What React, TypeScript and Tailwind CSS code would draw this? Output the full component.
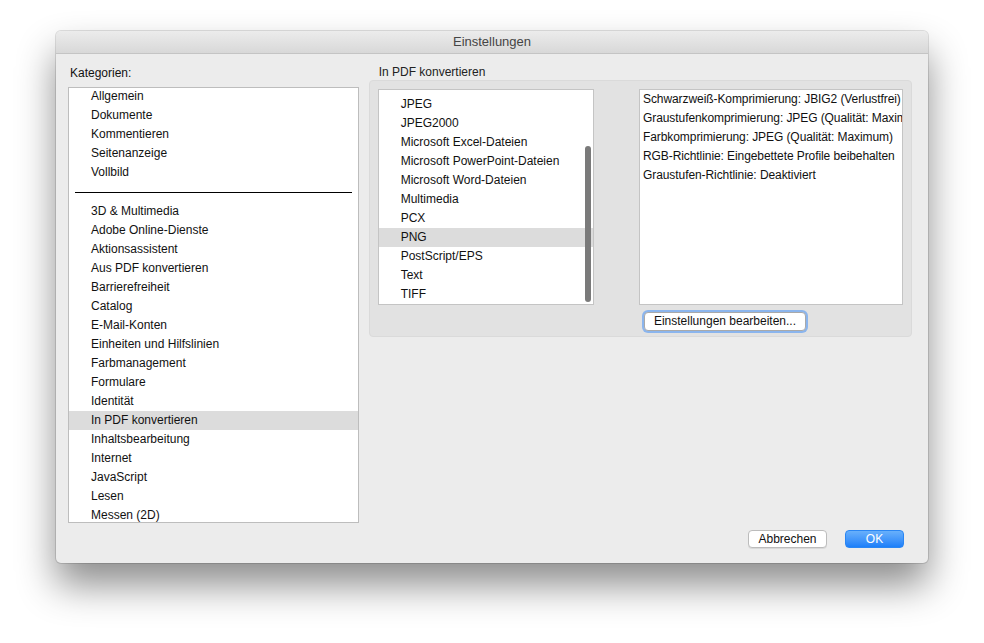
import React from "react";

const group1 = ["Allgemein", "Dokumente", "Kommentieren", "Seitenanzeige", "Vollbild"];
const group2 = [
  "3D & Multimedia",
  "Adobe Online-Dienste",
  "Aktionsassistent",
  "Aus PDF konvertieren",
  "Barrierefreiheit",
  "Catalog",
  "E-Mail-Konten",
  "Einheiten und Hilfslinien",
  "Farbmanagement",
  "Formulare",
  "Identität",
  "In PDF konvertieren",
  "Inhaltsbearbeitung",
  "Internet",
  "JavaScript",
  "Lesen",
  "Messen (2D)",
];
const formats = [
  "JPEG",
  "JPEG2000",
  "Microsoft Excel-Dateien",
  "Microsoft PowerPoint-Dateien",
  "Microsoft Word-Dateien",
  "Multimedia",
  "PCX",
  "PNG",
  "PostScript/EPS",
  "Text",
  "TIFF",
];
const details = [
  "Schwarzweiß-Komprimierung: JBIG2 (Verlustfrei)",
  "Graustufenkomprimierung: JPEG (Qualität: Maximum)",
  "Farbkomprimierung: JPEG (Qualität: Maximum)",
  "RGB-Richtlinie: Eingebettete Profile beibehalten",
  "Graustufen-Richtlinie: Deaktiviert",
];

function Row({ label, selected }: { label: string; selected?: boolean }) {
  return (
    <div
      className={`h-[19px] leading-[19px] pl-[22px] whitespace-nowrap ${
        selected ? "bg-[#dcdcdc]" : ""
      }`}
    >
      {label}
    </div>
  );
}

export default function App() {
  return (
    <div
      className="w-[984px] h-[643px] bg-white overflow-hidden pt-[31px] pl-[56px] text-[12px] text-[#111]"
      style={{ fontFamily: '"Liberation Sans", Arial, sans-serif' }}
    >
      <div className="w-[872px] h-[532px] rounded-[5px] bg-[#ececec] shadow-[0_22px_38px_rgba(0,0,0,0.45),0_0_0_1px_rgba(0,0,0,0.12)] flex flex-col overflow-hidden">
        {/* Title bar */}
        <div className="h-[23px] shrink-0 bg-gradient-to-b from-[#ececec] to-[#d8d8d8] border-b border-[#c4c4c4] flex items-center justify-center text-[13px] text-[#454545]">
          Einstellungen
        </div>

        {/* Body */}
        <div className="flex-1 flex flex-col pl-[12px] pr-[16px] pt-[11px] pb-[15px]">
          <div className="flex gap-[10px] flex-1 min-h-0">
            {/* Left column */}
            <div className="w-[291px] flex flex-col">
              <div className="h-[16px] leading-[16px] pl-[2px] mb-[6px]">Kategorien:</div>
              <div className="h-[436px] bg-white border border-[#bdbdbd] overflow-hidden">
                <div className="-mt-[1px]">
                  {group1.map((g) => (
                    <Row key={g} label={g} />
                  ))}
                  <div className="h-[20px] flex items-center px-[6px]">
                    <div className="h-px w-full bg-black" />
                  </div>
                  {group2.map((g) => (
                    <Row key={g} label={g} selected={g === "In PDF konvertieren"} />
                  ))}
                </div>
              </div>
            </div>

            {/* Right column */}
            <div className="w-[544px] flex flex-col">
              <div className="h-[15px] leading-[14px] pl-[10px] text-[#222]">In PDF konvertieren</div>
              <div className="h-[257px] bg-[#e2e2e2] rounded-[4px] border border-[#dadada] pt-[8px] pl-[8px] pr-[8px] flex flex-col">
                <div className="flex justify-between">
                  <div className="relative w-[216px] h-[216px] bg-white border border-[#c4c4c4] overflow-hidden pt-[5px]">
                    {formats.map((f) => (
                      <div
                        key={f}
                        className={`h-[19px] leading-[19px] pl-[22px] whitespace-nowrap ${
                          f === "PNG" ? "bg-[#dcdcdc]" : ""
                        }`}
                      >
                        {f}
                      </div>
                    ))}
                    <div className="absolute right-[2px] top-[56px] w-[6px] h-[156px] rounded-full bg-[#7a7a7a]" />
                  </div>
                  <div className="w-[264px] h-[216px] bg-white border border-[#c4c4c4] overflow-hidden pl-[3px] tracking-[-0.08px]">
                    {details.map((d) => (
                      <div key={d} className="h-[19px] leading-[19px] whitespace-nowrap">
                        {d}
                      </div>
                    ))}
                  </div>
                </div>
                <div className="flex justify-end mt-[7px] pr-[97px]">
                  <button className="h-[19px] w-[162px] rounded-[4px] bg-white border border-[#a9a9a9] shadow-[0_0_0_2px_rgba(110,165,240,0.75)] text-[12px] text-[#111] leading-[17px]">
                    Einstellungen bearbeiten...
                  </button>
                </div>
              </div>
            </div>
          </div>

          {/* Bottom buttons */}
          <div className="flex justify-end gap-[18px] pr-[8px]">
            <button className="h-[18px] w-[79px] rounded-[4px] bg-white border border-[#bcbcbc] shadow-[0_1px_0_rgba(0,0,0,0.08)] text-[12px] text-[#111] leading-[16px]">
              Abbrechen
            </button>
            <button className="h-[18px] w-[59px] rounded-[4px] bg-gradient-to-b from-[#68b0fb] to-[#1b7ff9] border border-[#2a86f3] text-[12px] text-white leading-[16px]">
              OK
            </button>
          </div>
        </div>
      </div>
    </div>
  );
}
